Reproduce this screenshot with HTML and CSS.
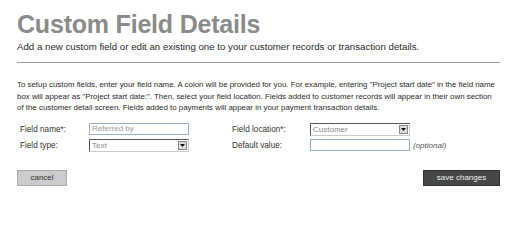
FILE: index.html
```html
<!DOCTYPE html>
<html>
<head>
<meta charset="utf-8">
<link rel="stylesheet" href="styles.css">
</head>
<body>
<div class="page">
  <h1 class="title">Custom Field Details</h1>
  <p class="subtitle">Add a new custom field or edit an existing one to your customer records or transaction details.</p>
  <hr class="rule">
  <p class="intro">To setup custom fields, enter your field name. A colon will be provided for you. For example, entering "Project start date" in the field name box will appear as "Project start date:". Then, select your field location. Fields added to customer records will appear in their own section of the customer detail screen. Fields added to payments will appear in your payment transaction details.</p>
  <div class="form">
    <label class="lbl">Field name*:</label>
    <div class="input">Referred by</div>
    <label class="lbl lbl-right">Field location*:</label>
    <div class="select"><span class="select-text">Customer</span><span class="arrow"><svg width="5" height="3" viewBox="0 0 5 3"><path d="M0 0H5L2.5 3Z" fill="#111"/></svg></span></div>
    <span></span>

    <label class="lbl">Field type:</label>
    <div class="select"><span class="select-text">Text</span><span class="arrow"><svg width="5" height="3" viewBox="0 0 5 3"><path d="M0 0H5L2.5 3Z" fill="#111"/></svg></span></div>
    <label class="lbl lbl-right">Default value:</label>
    <div class="input"></div>
    <span class="optional">(optional)</span>
  </div>
  <div class="actions">
    <button class="btn btn-cancel">cancel</button>
    <button class="btn btn-save">save changes</button>
  </div>
</div>
</body>
</html>
```

FILE: styles.css
```css
html, body {
  margin: 0;
  padding: 0;
  background: #fff;
}
.page {
  width: 483px;
  padding: 9px 0 0 17px;
  font-family: "Liberation Sans", Arial, sans-serif;
  font-size: 8px;
  color: #333;
}
.title {
  margin: 0;
  font-size: 25px;
  line-height: 30px;
  font-weight: bold;
  color: #8a8a8a;
  letter-spacing: -0.2px;
}
.subtitle {
  margin: 2px 0 0 0;
  font-size: 9.7px;
  line-height: 12px;
  color: #2a2a2a;
}
.rule {
  margin: 9px 0 0 0;
  border: 0;
  border-top: 1px solid #999;
  height: 0;
}
.intro {
  margin: 16px 0 0 0;
  font-size: 7.9px;
  line-height: 11.5px;
  color: #2a2a2a;
}
.form {
  display: grid;
  grid-template-columns: 69px 100px 43px 78px 100px auto;
  row-gap: 3px;
  align-items: center;
  margin: 9px 0 0 3px;
}
.lbl {
  font-size: 8.2px;
  color: #333;
}
.lbl-right {
  grid-column: 4;
}
.input {
  box-sizing: border-box;
  height: 12px;
  border: 1px solid #9db0c8;
  color: #999;
  padding: 0 2px;
  line-height: 10px;
}
.select {
  box-sizing: border-box;
  height: 13px;
  display: flex;
  align-items: center;
  border-top: 1px solid #555;
  border-left: 1px solid #555;
  border-right: 1px solid #ccc;
  border-bottom: 1px solid #ccc;
  color: #888;
  background: #fff;
}
.select-text {
  flex: 1;
  padding-left: 2px;
  line-height: 11px;
}
.arrow {
  box-sizing: border-box;
  width: 9px;
  height: 9px;
  margin-right: 1px;
  display: flex;
  align-items: center;
  justify-content: center;
  background: #ddd;
  border: 1px solid #888;
}
.arrow svg {
  display: block;
}
.optional {
  font-style: italic;
  color: #555;
  padding-left: 3px;
}
.actions {
  display: flex;
  justify-content: space-between;
  margin-top: 18px;
}
.btn {
  box-sizing: border-box;
  height: 16px;
  font-family: "Liberation Sans", Arial, sans-serif;
  font-size: 8px;
  line-height: 14px;
  padding: 0;
  cursor: pointer;
}
.btn-cancel {
  width: 50px;
  background: #cbcbcb;
  border: 1px solid #aaa;
  color: #333;
}
.btn-save {
  width: 77px;
  background: #474747;
  border: 1px solid #333;
  color: #eee;
}
```
